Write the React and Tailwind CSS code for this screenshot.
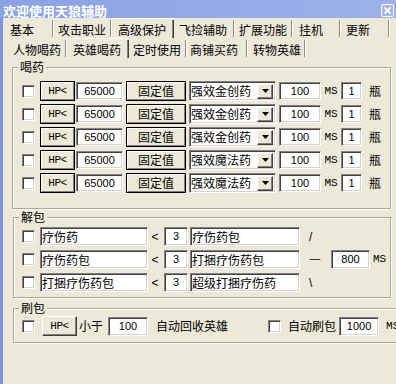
const CJK = "font-['Noto_Sans_CJK_SC',sans-serif]";
const NUM = "font-['Liberation_Sans',sans-serif] text-[11px]";
const MONO = "font-['Liberation_Mono',monospace] text-[11px]";

const sunken =
  "bg-white border border-t-[#848284] border-l-[#848284] border-b-white border-r-white shadow-[inset_1px_1px_0_#424142,inset_-1px_-1px_0_#d6d3ce]";
const raised =
  "bg-[#ece9d8] border border-t-white border-l-white border-b-[#404040] border-r-[#404040] shadow-[inset_-1px_-1px_0_#808080]";

function Check({ className = "" }) {
  return <div className={`w-[13px] h-[13px] shrink-0 ${sunken} ${className}`} />;
}

function Field({ w, className = "", center, children }) {
  return (
    <div
      className={`h-full shrink-0 flex items-center ${center ? "justify-center" : "pl-[1px]"} ${sunken} ${className}`}
      style={{ width: w }}
    >
      {children}
    </div>
  );
}

function DefBtn({ w, className = "", children }) {
  return (
    <div className={`h-full shrink-0 border border-black ${className}`} style={{ width: w }}>
      <div className="h-full border border-t-white border-l-white border-b-[#808080] border-r-[#808080] flex items-center justify-center">
        {children}
      </div>
    </div>
  );
}

function HP() {
  return <span className={`${MONO} text-[10px] tracking-[-0.5px]`}>HP&lt;</span>;
}

function Tab({ label, w, pad, active }) {
  return (
    <div
      className={`h-full shrink-0 flex items-center justify-between ${
        active ? "bg-[#ece9d8] border-l border-t border-l-white border-t-white" : ""
      }`}
      style={{ width: w, paddingLeft: pad }}
    >
      <span className="leading-[12px] pt-[3px]">{label}</span>
      {active ? (
        <span className="w-[2px] h-[18px] border-r border-[#404040] bg-[#808080]" />
      ) : (
        <span className="w-[1px] h-[17px] bg-[#8a8a8a] shadow-[1px_0_0_#fff]" />
      )}
    </div>
  );
}

function Group({ title, className = "", children }) {
  return (
    <fieldset
      className={`border border-[#aca899] shadow-[inset_1px_1px_0_#fff,1px_1px_0_#fff] ${className}`}
    >
      <legend className="ml-[5px] px-[2px] leading-[14px] bg-[#ece9d8]">{title}</legend>
      {children}
    </fieldset>
  );
}

const tabs1 = [
  ["基本", 48, 5],
  ["攻击职业", 58, 5],
  ["高级保护", 63, 6, true],
  ["飞捡辅助", 60, 5],
  ["扩展功能", 58, 5],
  ["挂机", 48, 7],
  ["更新", 49, 6],
];
const tabs2 = [
  ["人物喝药", 61, 8],
  ["英雄喝药", 63, 6, true],
  ["定时使用", 57, 4],
  ["商铺买药", 61, 4],
  ["转物英雄", 58, 6],
];

const potions = ["强效金创药", "强效金创药", "强效金创药", "强效魔法药", "强效魔法药"];
const unpack = [
  ["疗伤药", "疗伤药包", "/"],
  ["疗伤药包", "打捆疗伤药包", "一"],
  ["打捆疗伤药包", "超级打捆疗伤药", "\\"],
];

export default function App() {
  return (
    <div className={`w-[396px] h-[384px] overflow-hidden bg-[#ece9d8] flex flex-col text-[12px] text-black ${CJK}`}>
      <div className="h-[18px] shrink-0 flex items-center justify-between bg-gradient-to-r from-[#8aa2e2] to-[#9cb2ea] pl-[3px] pr-[2px]">
        <span className="text-white font-bold text-[13px] leading-[13px] pt-[2px]">欢迎使用天狼辅助</span>
        <div className="w-[13px] h-[13px] mt-[3px] rounded-[2px] border border-white bg-[#a8b6ec] flex items-center justify-center">
          <svg width="7" height="7" viewBox="0 0 7 7">
            <path d="M0.5 0.5 L6.5 6.5 M6.5 0.5 L0.5 6.5" stroke="#fff" strokeWidth="1.8" />
          </svg>
        </div>
      </div>

      <div className="flex flex-1">
        <div className="w-[3px] shrink-0 bg-[#7c94dc]" />
        <div className="flex-1 flex flex-col">
          <div className="h-[20px] flex pl-[2px]">
            {tabs1.map(([l, w, p, a]) => (
              <Tab key={l} label={l} w={w} pad={p} active={a} />
            ))}
          </div>
          <div className="h-[20px] flex pl-[2px]">
            {tabs2.map(([l, w, p, a]) => (
              <Tab key={l} label={l} w={w} pad={p} active={a} />
            ))}
          </div>

          <Group title="喝药" className="ml-[9px] w-[379px] mt-[2px]">
            <div className="pt-[7px] pb-[15px] flex flex-col gap-[3px]">
              {potions.map((p, i) => (
                <div key={i} className="h-[20px] flex items-center">
                  <Check className="ml-[9px]" />
                  <DefBtn w={35} className="ml-[5px]">
                    <HP />
                  </DefBtn>
                  <div className="h-[18px] ml-[1px] flex">
                    <Field w={47} center>
                      <span className={NUM}>65000</span>
                    </Field>
                  </div>
                  <DefBtn w={60} className="ml-[3px]">
                    固定值
                  </DefBtn>
                  <div className={`h-[20px] w-[87px] ml-[3px] shrink-0 flex items-center justify-between pl-[1px] pr-[2px] ${sunken}`}>
                    <span>{p}</span>
                    <div className={`w-[16px] h-[15px] flex items-center justify-center ${raised}`}>
                      <svg width="7" height="4" viewBox="0 0 7 4">
                        <path d="M0 0 H7 L3.5 4 Z" fill="#000" />
                      </svg>
                    </div>
                  </div>
                  <div className="h-[18px] ml-[3px] flex">
                    <Field w={42} center>
                      <span className={NUM}>100</span>
                    </Field>
                  </div>
                  <span className={`w-[20px] text-center ${MONO}`}>MS</span>
                  <div className="h-[18px] flex">
                    <Field w={21} center>
                      <span className={NUM}>1</span>
                    </Field>
                  </div>
                  <span className="ml-[7px]">瓶</span>
                </div>
              ))}
            </div>
          </Group>

          <Group title="解包" className="ml-[10px] w-[378px] mt-[1px]">
            <div className="pt-[3px] pb-[5px] flex flex-col gap-[4px]">
              {unpack.map(([a, b, s], i) => (
                <div key={i} className="h-[19px] flex items-center">
                  <Check className="ml-[8px]" />
                  <Field w={108} className="ml-[5px]">
                    {a}
                  </Field>
                  <span className="w-[14px] text-center font-['Liberation_Sans',sans-serif]">&lt;</span>
                  <Field w={24} center className="ml-[2px]">
                    <span className={NUM}>3</span>
                  </Field>
                  <Field w={110} className="ml-[2px]">
                    {b}
                  </Field>
                  <span className="w-[31px] pl-[9px] font-['Liberation_Sans',sans-serif]">{s}</span>
                  {i === 1 && (
                    <>
                      <Field w={39} center>
                        <span className={NUM}>800</span>
                      </Field>
                      <span className={`ml-[3px] ${MONO}`}>MS</span>
                    </>
                  )}
                </div>
              ))}
            </div>
          </Group>

          <Group title="刷包" className="ml-[10px] w-[378px] mt-[3px]">
            <div className="pt-[1px] pb-[6px]">
              <div className="h-[20px] flex items-center whitespace-nowrap">
                <Check className="ml-[8px]" />
                <div className={`w-[35px] h-full ml-[7px] shrink-0 flex items-center justify-center ${raised}`}>
                  <HP />
                </div>
                <span className="ml-[2px]">小于</span>
                <div className="h-[19px] ml-[5px] flex">
                  <Field w={40} center>
                    <span className={NUM}>100</span>
                  </Field>
                </div>
                <span className="ml-[8px]">自动回收英雄</span>
                <Check className="ml-[40px]" />
                <span className="ml-[7px]">自动刷包</span>
                <div className="h-[19px] ml-[3px] flex">
                  <Field w={40} center>
                    <span className={NUM}>1000</span>
                  </Field>
                </div>
                <span className={`ml-[7px] ${MONO}`}>MS</span>
              </div>
            </div>
          </Group>
        </div>
      </div>
    </div>
  );
}
